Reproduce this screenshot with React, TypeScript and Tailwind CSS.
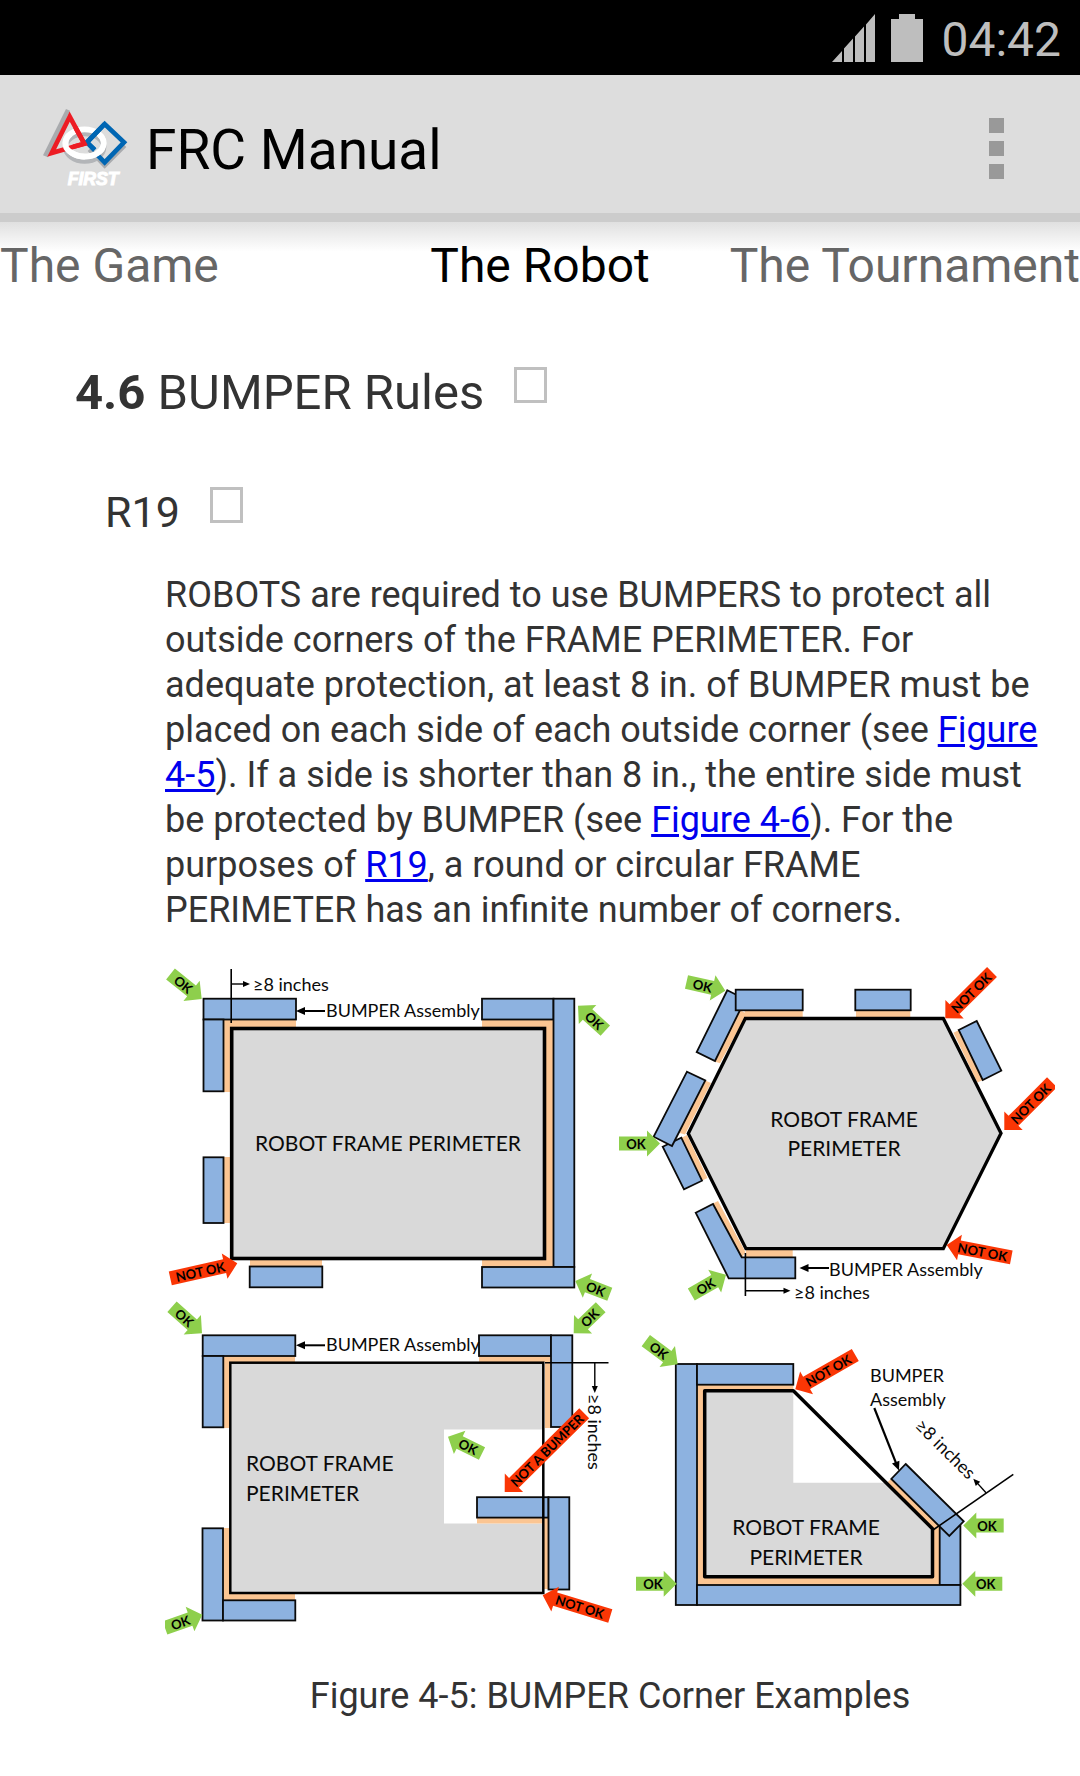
import React from "react";

type Point = [number, number];

type BlockArrowProps = {
  tail: Point;
  tip: Point;
  label: "OK" | "NOT OK" | "NOT A BUMPER";
};

/** Thick arrow with its label running along the shaft, always readable left to right. */
function BlockArrow({ tail, tip, label }: BlockArrowProps) {
  const dx = tip[0] - tail[0];
  const dy = tip[1] - tail[1];
  const length = Math.hypot(dx, dy);
  const angle = (Math.atan2(dy, dx) * 180) / Math.PI;
  const flipped = Math.abs(angle) > 90;
  const neck = -13;
  const shape = `0,0 ${neck},-13 ${neck},-7 ${-length},-7 ${-length},7 ${neck},7 ${neck},13`;
  const middle = -(length + 7) / 2;
  return (
    <g transform={`translate(${tip[0]} ${tip[1]}) rotate(${angle})`}>
      <polygon points={shape} className={label === "OK" ? "fill-[#8ecf4c]" : "fill-[#fa3605]"} />
      <text
        transform={`translate(${middle} 0) rotate(${flipped ? 180 : 0})`}
        y={5}
        textAnchor="middle"
        className="fill-black text-[13px] font-bold"
      >
        {label}
      </text>
    </g>
  );
}

type LeaderProps = { from: Point; to: Point; width?: number; head?: number };

/** Thin leader line that ends in a small solid arrow head. */
function Leader({ from, to, width = 2, head = 6 }: LeaderProps) {
  const dx = to[0] - from[0];
  const dy = to[1] - from[1];
  const length = Math.hypot(dx, dy);
  const angle = (Math.atan2(dy, dx) * 180) / Math.PI;
  return (
    <g transform={`translate(${to[0]} ${to[1]}) rotate(${angle})`}>
      <line x1={-length} y1={0} x2={-head} y2={0} className="stroke-black" strokeWidth={width} />
      <polygon points={`0,0 ${-head - 1},${-head / 2} ${-head - 1},${head / 2}`} className="fill-black" />
    </g>
  );
}

const BUMPER = "fill-[#8db2e0] stroke-[#0a0a0a]";
const PAD = "fill-[#fbc592]";
const FRAME_FILL = "fill-[#d9d9d9]";
const FRAME_LINE = "fill-none stroke-black";
const NAME = "fill-[#0a0a0a] text-[21px]";
const NOTE = "fill-[#0a0a0a] text-[18px]";

function Bumper({ box }: { box: [number, number, number, number] }) {
  const [x1, y1, x2, y2] = box;
  return <rect x={x1} y={y1} width={x2 - x1} height={y2 - y1} className={BUMPER} strokeWidth={1.8} />;
}

function Pad({ box }: { box: [number, number, number, number] }) {
  const [x1, y1, x2, y2] = box;
  return <rect x={x1} y={y1} width={x2 - x1} height={y2 - y1} className={PAD} />;
}

function SquareFrame() {
  return (
    <g>
      <Pad box={[223, 1019, 296, 1028]} />
      <Pad box={[223, 1019, 231, 1092]} />
      <Pad box={[223, 1157, 231, 1223]} />
      <Pad box={[250, 1258, 322, 1267]} />
      <Pad box={[482, 1019, 554, 1028]} />
      <Pad box={[545, 1019, 554, 1267]} />
      <Pad box={[482, 1258, 554, 1267]} />
      <Bumper box={[203.5, 998.7, 296, 1019.5]} />
      <Bumper box={[203.5, 1019.5, 223.5, 1091.3]} />
      <Bumper box={[203.5, 1157.3, 223.5, 1223]} />
      <Bumper box={[249.7, 1266.5, 322.3, 1287.3]} />
      <Bumper box={[482, 998.7, 553.5, 1019.5]} />
      <Bumper box={[553.5, 998.7, 574.3, 1267]} />
      <Bumper box={[482, 1267, 574.3, 1287.5]} />
      <rect x={231.7} y={1028.5} width={312.8} height={230} className={FRAME_FILL} />
      <rect x={231.7} y={1028.5} width={312.8} height={230} className={FRAME_LINE} strokeWidth={3.6} />
      <line x1={231.2} y1={969} x2={231.2} y2={1023} className="stroke-black" strokeWidth={1.6} />
      <Leader from={[231, 984]} to={[250, 984]} width={1.4} />
      <text x={253} y={991} className={NOTE}>≥8 inches</text>
      <Leader from={[325, 1011]} to={[296, 1011]} head={8} />
      <text x={326} y={1017} className={NOTE}>BUMPER Assembly</text>
      <text x={388} y={1151} textAnchor="middle" className={NAME}>ROBOT FRAME PERIMETER</text>
      <BlockArrow tail={[170.5, 974]} tip={[201.7, 999]} label="OK" />
      <BlockArrow tail={[605.3, 1030.7]} tip={[578, 1005.7]} label="OK" />
      <BlockArrow tail={[609.8, 1294.2]} tip={[575.3, 1281]} label="OK" />
      <BlockArrow tail={[170.3, 1278.3]} tip={[237.3, 1263.3]} label="NOT OK" />
    </g>
  );
}

function HexagonFrame() {
  const hexagon = "745.3,1018.5 688.3,1133.5 746,1248.7 943.3,1248.7 1001,1133.3 943.3,1018.5";
  return (
    <g>
      <Pad box={[744.7, 1010, 802.7, 1018]} />
      <Pad box={[746, 1250, 792.7, 1258]} />
      <Pad box={[856, 1010, 910.3, 1018]} />
      <polygon points="740,1010 747,1014 720,1063.3 713,1061" className={PAD} />
      <polygon points="704,1080 711,1083 685,1134.5 678,1132.5" className={PAD} />
      <polygon points="681,1138 687,1135 707.5,1178 701,1181" className={PAD} />
      <polygon points="712,1204 718,1201 745.5,1252 742,1257.5" className={PAD} />
      <polygon points="953.5,1032.7 959,1030 983,1080 977.3,1082.5" className={PAD} />
      <g className={BUMPER} strokeWidth={1.8}>
        <polygon points="727.3,990.3 745.3,999.3 715,1061 696.7,1052" />
        <polygon points="662.7,1146.7 681.3,1137.7 702,1180.7 684,1189.3" />
        <polygon points="687,1071.7 705.3,1080.5 672,1146 653.7,1136.7" />
        <polygon points="695.7,1212.7 713,1204 741.7,1257.3 795.3,1257.3 795.3,1278.3 728.7,1278.3" />
        <polygon points="958.7,1030 976.7,1021 1001.3,1070.7 982.7,1080" />
      </g>
      <Bumper box={[735.7, 989.7, 802.7, 1010.3]} />
      <Bumper box={[855.3, 989.7, 910.7, 1010.3]} />
      <polygon points={hexagon} className={FRAME_FILL} />
      <polygon points={hexagon} className={FRAME_LINE} strokeWidth={3.3} />
      <line x1={745.4} y1={1253} x2={745.4} y2={1296} className="stroke-black" strokeWidth={1.6} />
      <Leader from={[745, 1290.7]} to={[790.5, 1290.7]} width={1.4} />
      <text x={794} y={1299} className={NOTE}>≥8 inches</text>
      <Leader from={[829, 1268]} to={[799.5, 1268]} head={8} />
      <text x={829} y={1276} className={NOTE}>BUMPER Assembly</text>
      <text textAnchor="middle" className={NAME}>
        <tspan x={844} y={1127}>ROBOT FRAME</tspan>
        <tspan x={844} y={1156}>PERIMETER</tspan>
      </text>
      <BlockArrow tail={[686.5, 982]} tip={[725.3, 990.7]} label="OK" />
      <BlockArrow tail={[619, 1143.5]} tip={[660, 1143.5]} label="OK" />
      <BlockArrow tail={[691.3, 1294.5]} tip={[726, 1274.7]} label="OK" />
      <BlockArrow tail={[992, 972]} tip={[945.3, 1018.3]} label="NOT OK" />
      <BlockArrow tail={[1052, 1082.3]} tip={[1004.3, 1130]} label="NOT OK" />
      <BlockArrow tail={[1011.3, 1257.3]} tip={[946.7, 1245]} label="NOT OK" />
    </g>
  );
}

function NotchedFrame() {
  return (
    <g>
      <Pad box={[223, 1356, 295, 1362]} />
      <Pad box={[223, 1356, 230, 1428]} />
      <Pad box={[223, 1528, 230, 1600]} />
      <Pad box={[223, 1593, 295, 1600]} />
      <Pad box={[479, 1356, 551, 1362]} />
      <Pad box={[545, 1356, 551, 1428]} />
      <path d="M230.3 1362.7H543.3V1429.5H444V1523.5H543.3V1593H230.3Z" className={FRAME_FILL} />
      <Pad box={[477, 1517, 548, 1523.5]} />
      <Pad box={[543, 1517, 548, 1589]} />
      <Bumper box={[202.7, 1335.3, 295.3, 1356]} />
      <Bumper box={[202.7, 1356, 223.3, 1427.3]} />
      <Bumper box={[202.5, 1528.3, 223, 1620.5]} />
      <Bumper box={[223, 1600.3, 295.3, 1620.5]} />
      <Bumper box={[479, 1335.3, 551, 1356]} />
      <Bumper box={[551, 1335.3, 572.3, 1427]} />
      <Bumper box={[477, 1497.2, 548.5, 1517.6]} />
      <Bumper box={[548.5, 1497.2, 569.3, 1589.5]} />
      <rect x={230.3} y={1362.7} width={313} height={230.3} className={FRAME_LINE} strokeWidth={2.5} />
      <line x1={545} y1={1362.7} x2={608.5} y2={1362.7} className="stroke-black" strokeWidth={1.6} />
      <Leader from={[594.8, 1363]} to={[594.8, 1393]} width={1.4} />
      <text transform="translate(588 1394) rotate(90)" className={NOTE}>≥8 inches</text>
      <Leader from={[325, 1345.3]} to={[296, 1345.3]} head={8} />
      <text x={326} y={1351} className={NOTE}>BUMPER Assembly</text>
      <text className={NAME}>
        <tspan x={246} y={1471}>ROBOT FRAME</tspan>
        <tspan x={246} y={1501}>PERIMETER</tspan>
      </text>
      <BlockArrow tail={[172, 1306.7]} tip={[202, 1333.3]} label="OK" />
      <BlockArrow tail={[165, 1628]} tip={[202.3, 1614.7]} label="OK" />
      <BlockArrow tail={[600.7, 1307.2]} tip={[573.7, 1333.3]} label="OK" />
      <BlockArrow tail={[482, 1453.5]} tip={[448, 1436.7]} label="OK" />
      <BlockArrow tail={[584.2, 1413.3]} tip={[504.7, 1492]} label="NOT A BUMPER" />
      <BlockArrow tail={[610.3, 1616]} tip={[542.7, 1595.3]} label="NOT OK" />
    </g>
  );
}

function CutCornerFrame() {
  return (
    <g>
      <path
        d="M697 1384H793.3V1391H705V1577H932V1528L887 1482.5 891 1479 940 1526V1585H697Z"
        className={PAD}
      />
      <path d="M704.7 1390.7H793.3V1482.7H886L932.5 1528.7V1576.7H704.7Z" className={FRAME_FILL} />
      <Bumper box={[675.8, 1364, 697, 1605]} />
      <Bumper box={[697, 1364, 793.3, 1384.7]} />
      <Bumper box={[939.7, 1526, 960.4, 1585]} />
      <Bumper box={[697, 1585, 960.4, 1605]} />
      <polygon
        points="905.7,1464 963.7,1521.3 949.3,1536 891.3,1479"
        className={BUMPER}
        strokeWidth={1.8}
      />
      <path
        d="M704.7 1390.7H793.3L932.5 1528.7V1576.7H704.7Z"
        className={FRAME_LINE}
        strokeWidth={3.5}
        strokeLinejoin="round"
      />
      <line x1={933} y1={1530} x2={1013.3} y2={1474.3} className="stroke-black" strokeWidth={1.6} />
      <Leader from={[986, 1492.7]} to={[973.3, 1478.7]} width={1.4} />
      <text transform="translate(914 1427) rotate(44.5)" className={NOTE}>≥8 inches</text>
      <Leader from={[874.3, 1408]} to={[899, 1470.5]} width={2.2} head={8} />
      <text className={NOTE}>
        <tspan x={870} y={1382}>BUMPER</tspan>
        <tspan x={870} y={1406}>Assembly</tspan>
      </text>
      <text textAnchor="middle" className={NAME}>
        <tspan x={806} y={1535}>ROBOT FRAME</tspan>
        <tspan x={806} y={1565}>PERIMETER</tspan>
      </text>
      <BlockArrow tail={[645.8, 1340.7]} tip={[677.7, 1364.3]} label="OK" />
      <BlockArrow tail={[636, 1583.7]} tip={[676.7, 1583.7]} label="OK" />
      <BlockArrow tail={[1003.7, 1525.5]} tip={[963.3, 1525.5]} label="OK" />
      <BlockArrow tail={[1002.3, 1583.7]} tip={[962.3, 1583.7]} label="OK" />
      <BlockArrow tail={[855.3, 1355]} tip={[795.3, 1389.3]} label="NOT OK" />
    </g>
  );
}

function FirstLogo() {
  return (
    <svg viewBox="36 54 264 240" className="h-20 w-[88px]" aria-hidden="true">
      <polygon points="108,57 120,62 54,202 39,196" className="fill-[#a9abae]" />
      <g fill="none" strokeLinejoin="miter">
        <path d="M178 178L224 226L284 166" stroke="#a9abae" strokeWidth={14} />
        <ellipse cx="164" cy="172" rx="57" ry="41" stroke="#b3b5b8" strokeWidth={16} />
        <ellipse cx="164" cy="159" rx="57" ry="41" stroke="#ffffff" strokeWidth={17} />
        <path d="M119 80L65 189L163 161Z" stroke="#ed1c24" strokeWidth={14} />
        <path
          d="M122 132C100 146 102 172 118 184C132 195 146 200 164 200"
          stroke="#ffffff"
          strokeWidth={17}
        />
        <path d="M204 197L224 217L282 157L224 102L171 157L194 180" stroke="#0066b3" strokeWidth={14} />
        <path d="M150 199C196 203 220 185 221 160C221 150 216 141 208 134" stroke="#ffffff" strokeWidth={16} />
        <path d="M224 102L171 157L194 180" stroke="#0066b3" strokeWidth={14} />
        <path d="M136 112L163 161L130 170" stroke="#ed1c24" strokeWidth={14} />
      </g>
      <text
        x="113"
        y="284"
        className="fill-white stroke-white font-['Liberation_Sans'] text-[53px] font-bold italic"
        strokeWidth={3}
      >
        FIRST
      </text>
    </svg>
  );
}

function StatusBar() {
  return (
    <div className="flex h-[75px] items-center justify-end bg-black pr-[19px] text-[#bebebe]">
      <svg viewBox="0 0 43 48" className="mr-4 h-12 w-[43px] fill-current" role="img" aria-label="Signal">
        <path d="M0 48L10 37V48ZM12 48V34.500L21 24.500V48ZM23 48V22.500L32 12.500V48ZM34 48V10.500L43 0V48Z" />
      </svg>
      <svg viewBox="0 0 32 48" className="mr-[18px] h-12 w-8 fill-current" role="img" aria-label="Battery">
        <path d="M8 0H24V5H32V48H0V5H8Z" />
      </svg>
      <span className="pt-1 text-[48px] leading-[56px]">04:42</span>
    </div>
  );
}

function ActionBar() {
  return (
    <header className="flex h-[147px] items-center border-b-[9px] border-[#cccccc] bg-[#dddddd] pt-2 pl-[42px]">
      <FirstLogo />
      <h1 className="ml-4 pt-1 text-[55px] leading-[64px] text-black">FRC Manual</h1>
      <button
        type="button"
        aria-label="More options"
        className="ml-auto flex w-[168px] flex-col items-center gap-2 py-4"
      >
        <span className="size-[15px] bg-[#999999]" />
        <span className="size-[15px] bg-[#999999]" />
        <span className="size-[15px] bg-[#999999]" />
      </button>
    </header>
  );
}

function PagerTabs() {
  return (
    <nav
      role="tablist"
      aria-label="Manual sections"
      className="grid grid-cols-[1fr_auto_1fr] bg-linear-to-b from-[#e0e0e0] to-white to-40% pt-[14px] text-[48px] leading-[60px] text-[#666666]"
    >
      <button type="button" role="tab" aria-selected="false" className="text-left whitespace-nowrap">
        The Game
      </button>
      <button type="button" role="tab" aria-selected="true" className="whitespace-nowrap text-black">
        The Robot
      </button>
      <button type="button" role="tab" aria-selected="false" className="text-right whitespace-nowrap">
        The Tournament
      </button>
    </nav>
  );
}

function SectionCheckbox({ label }: { label: string }) {
  return (
    <input
      type="checkbox"
      aria-label={label}
      className="h-9 w-[33px] appearance-none border-[3px] border-[#c0c0c0] bg-white checked:bg-[#c0c0c0]"
    />
  );
}

function ManualLink({ href, children }: { href: string; children: React.ReactNode }) {
  return (
    <a href={href} className="text-[#0000ee] underline">
      {children}
    </a>
  );
}

export default function App() {
  return (
    <div className="min-h-screen bg-white font-[Roboto,'Noto_Sans',sans-serif] text-[#333333]">
      <StatusBar />
      <ActionBar />
      <PagerTabs />
      <main className="pr-[25px]">
        <div className="flex items-start gap-[30px] pt-[67px] pl-[75px]">
          <h2 className="text-[49px] leading-[60px]">
            <b>4.6</b> BUMPER Rules
          </h2>
          <div className="flex pt-1">
            <SectionCheckbox label="Mark 4.6 BUMPER Rules" />
          </div>
        </div>
        <div id="r19" className="flex items-start gap-[30px] pt-[59px] pl-[105px]">
          <h3 className="pt-[3px] text-[43px] leading-[54px]">R19</h3>
          <div className="flex pt-[5px]">
            <SectionCheckbox label="Mark R19" />
          </div>
        </div>
        <div className="pt-[34px] pl-[165px]">
          <p className="text-[36px] leading-[45px]">
            ROBOTS are required to use BUMPERS to protect all outside corners of the FRAME PERIMETER. For
            adequate protection, at least 8 in. of BUMPER must be placed on each side of each outside
            corner (see <ManualLink href="#figure-4-5">Figure 4-5</ManualLink>). If a side is shorter than
            8 in., the entire side must be protected by BUMPER (see{" "}
            <ManualLink href="#figure-4-6">Figure 4-6</ManualLink>). For the purposes of{" "}
            <ManualLink href="#r19">R19</ManualLink>, a round or circular FRAME PERIMETER has an infinite
            number of corners.
          </p>
          <figure id="figure-4-5" className="pt-[27px]">
            <svg
              viewBox="165 960 890 680"
              className="block w-full font-[Lato,sans-serif]"
              role="img"
              aria-label="Four robot frames with correct and incorrect bumper placement at the corners"
            >
              <SquareFrame />
              <HexagonFrame />
              <NotchedFrame />
              <CutCornerFrame />
            </svg>
            <figcaption className="pt-[34px] pb-10 text-center text-[36px] leading-[45px]">
              Figure 4-5: BUMPER Corner Examples
            </figcaption>
          </figure>
        </div>
      </main>
    </div>
  );
}
